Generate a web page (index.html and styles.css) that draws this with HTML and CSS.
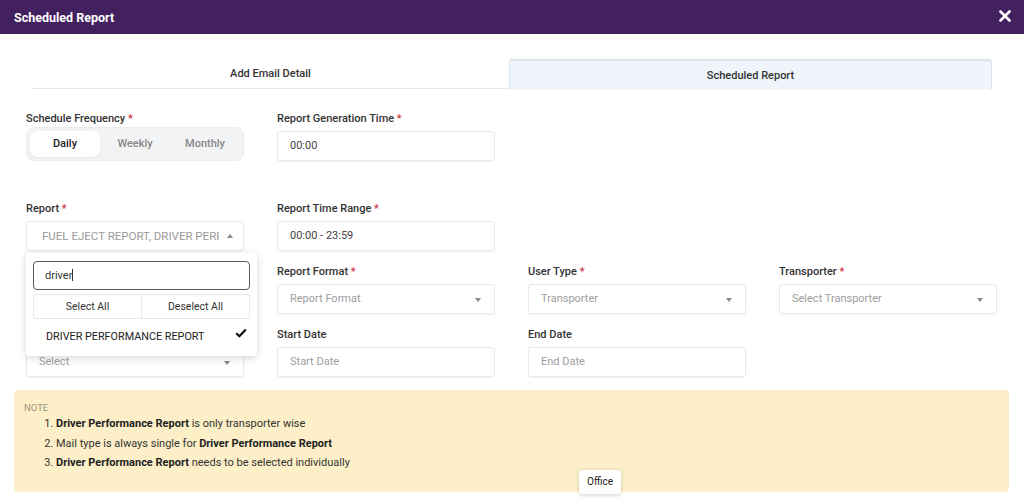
FILE: index.html
```html
<!DOCTYPE html>
<html lang="en">
<head>
	<meta charset="UTF-8">
	<title>Scheduled Report</title>
	<link rel="stylesheet" href="styles.css">
</head>
<body>
<div class="modal">
	<div class="modal-head">
		<span class="modal-title">Scheduled Report</span>
		<svg class="close" width="12" height="12" viewBox="0 0 12 12"><path d="M1.5 1.5L10.5 10.5M10.5 1.5L1.5 10.5" stroke="#fff" stroke-width="2.6" stroke-linecap="round"/></svg>
	</div>

	<div class="tabs">
		<div class="tab">Add Email Detail</div>
		<div class="tab active">Scheduled Report</div>
	</div>

	<div class="form">
		<div class="row first">
			<div class="group">
				<label>Schedule Frequency <i>*</i></label>
				<div class="segment">
					<span class="on">Daily</span>
					<span>Weekly</span>
					<span>Monthly</span>
				</div>
			</div>
			<div class="group">
				<label>Report Generation Time <i>*</i></label>
				<div class="field">00:00</div>
			</div>
		</div>

		<div class="row">
			<div class="group report">
				<label>Report <i>*</i></label>
				<div class="field select open"><span class="clip">FUEL EJECT REPORT, DRIVER PERFOR</span><b class="up"></b></div>
				<div class="dropdown">
					<div class="search">driver<span class="caret"></span></div>
					<div class="btns">
						<span>Select All</span>
						<span>Deselect All</span>
					</div>
					<div class="option">DRIVER PERFORMANCE REPORT<svg class="tick" width="12" height="10" viewBox="0 0 12 10"><path d="M1.2 5.2L4.4 8.3L10.8 1.4" fill="none" stroke="#111" stroke-width="2.2"/></svg></div>
				</div>
			</div>
			<div class="group">
				<label>Report Time Range <i>*</i></label>
				<div class="field">00:00 - 23:59</div>
			</div>
		</div>

		<div class="row">
			<div class="group">
				<label>&nbsp;</label>
				<div class="field"></div>
			</div>
			<div class="group">
				<label>Report Format <i>*</i></label>
				<div class="field select ph">Report Format<b></b></div>
			</div>
			<div class="group">
				<label>User Type <i>*</i></label>
				<div class="field select ph">Transporter<b></b></div>
			</div>
			<div class="group">
				<label>Transporter <i>*</i></label>
				<div class="field select ph">Select Transporter<b></b></div>
			</div>
		</div>

		<div class="row last">
			<div class="group">
				<label>&nbsp;</label>
				<div class="field select ph">Select<b></b></div>
			</div>
			<div class="group">
				<label>Start Date</label>
				<div class="field ph">Start Date</div>
			</div>
			<div class="group">
				<label>End Date</label>
				<div class="field ph">End Date</div>
			</div>
		</div>
	</div>

	<div class="note">
		<div class="note-title">NOTE</div>
		<ol>
			<li><strong>Driver Performance Report</strong> is only transporter wise</li>
			<li>Mail type is always single for <strong>Driver Performance Report</strong></li>
			<li><strong>Driver Performance Report</strong> needs to be selected individually</li>
		</ol>
		<div class="tooltip">Office</div>
	</div>
</div>
</body>
</html>
```

FILE: styles.css
```css
*{
	box-sizing: border-box;
}
body{
	margin: 0;
	background: #fff;
	font-family: Roboto, "Liberation Sans", Arial, sans-serif;
	color: #333;
}
.modal{
	width: 1024px;
	height: 501px;
	overflow: hidden;
}
.modal-head{
	height: 34px;
	background: #43215f;
	display: flex;
	align-items: center;
	justify-content: space-between;
	padding: 0 13px 0 14px;
}
.modal-title{
	color: #fff;
	font-size: 12.5px;
	font-weight: 700;
}
.close{
	margin-top: -3px;
}

.tabs{
	display: flex;
	margin: 25px 32px 0 32px;
}
.tab{
	height: 30px;
	line-height: 30px;
	font-size: 11px;
	font-weight: 500;
	color: #333;
	text-align: center;
	border-bottom: 1px solid #e4e9ee;
	width: 477px;
}
.tab.active{
	width: 483px;
	background: #eff5fb;
	border: 1px solid #dde5ec;
	border-top: 2px solid #dfe5eb;
	border-bottom: none;
	border-radius: 3px 3px 0 0;
	height: 31px;
}

.form{
	padding: 22px 26px 0 26px;
}
.row{
	display: grid;
	grid-template-columns: repeat(4, 218px);
	column-gap: 33px;
	margin-bottom: 14px;
}
.row.first{
	margin-bottom: 41px;
}
.row.last{
	margin-bottom: 13px;
}
.group{
	position: relative;
}
label{
	display: block;
	font-size: 11px;
	font-weight: 500;
	line-height: 14px;
	margin-bottom: 5px;
	color: #333;
}
label i{
	color: #d0344b;
	font-style: normal;
}
.field{
	height: 30px;
	line-height: 28px;
	border: 1px solid #e9e9e9;
	border-radius: 3px;
	box-shadow: 0 1px 2px rgba(0,0,0,0.05);
	padding: 0 12px;
	font-size: 11px;
	color: #444;
	background: #fff;
	position: relative;
}
.field.ph{
	color: #9e9e9e;
}
.select b{
	position: absolute;
	right: 13px;
	top: 13px;
	border-left: 3.5px solid transparent;
	border-right: 3.5px solid transparent;
	border-top: 4px solid #888;
}
.select b.up{
	border-top: none;
	border-bottom: 4px solid #888;
	right: 10px;
	top: 12px;
}
.select.open{
	padding: 0 24px 0 15px;
	color: #9a9a9a;
	font-size: 11.5px;
	text-transform: uppercase;
}
.clip{
	display: block;
	white-space: nowrap;
	overflow: hidden;
}

.segment{
	display: flex;
	height: 34px;
	margin-top: -4px;
	background: #f2f3f5;
	border: 1px solid #ebecee;
	border-radius: 8px;
	padding: 3px;
}
.segment span{
	flex: 1;
	text-align: center;
	line-height: 26px;
	font-size: 11px;
	font-weight: 500;
	color: #888;
}
.segment .on{
	background: #fff;
	color: #222;
	border-radius: 7px;
	box-shadow: 0 1px 2px rgba(0,0,0,0.06);
}

.dropdown{
	position: absolute;
	top: 51px;
	left: 0;
	width: 231px;
	height: 103px;
	background: #fff;
	box-shadow: 0 2px 8px rgba(0,0,0,0.16);
	border-radius: 2px;
	padding: 8px 7px;
	z-index: 2;
}
.search{
	height: 29px;
	border: 1px solid #5b5569;
	border-radius: 4px;
	padding: 0 11px;
	line-height: 27px;
	font-size: 11px;
	color: #333;
}
.caret{
	display: inline-block;
	width: 1px;
	height: 12px;
	background: #333;
	vertical-align: middle;
	margin-top: -2px;
}
.btns{
	display: flex;
	margin-top: 4px;
	border: 1px solid #e7e7e7;
	border-radius: 2px;
	height: 25px;
}
.btns span{
	flex: 1;
	text-align: center;
	line-height: 23px;
	font-size: 10.5px;
	color: #333;
}
.btns span + span{
	border-left: 1px solid #e7e7e7;
}
.option{
	position: relative;
	padding: 0 0 0 13px;
	margin-top: 4px;
	line-height: 28px;
	font-size: 10.8px;
	color: #222;
}
.tick{
	position: absolute;
	right: 3px;
	top: 5px;
}

.note{
	position: relative;
	margin: 0 15px 0 14px;
	height: 102px;
	background: #fdf0c8;
	border-radius: 4px;
	padding: 12px 10px 0 10px;
}
.note-title{
	font-size: 9.5px;
	color: #9a9482;
	line-height: 12px;
}
.note ol{
	margin: 0;
	padding-left: 32px;
	font-size: 11px;
	line-height: 19.5px;
	color: #333;
}
.note strong{
	font-weight: 700;
	color: #222;
}
.tooltip{
	position: absolute;
	left: 565px;
	top: 80px;
	width: 42px;
	height: 24px;
	line-height: 24px;
	text-align: center;
	font-size: 10px;
	color: #222;
	background: #fff;
	border-radius: 4px;
	box-shadow: 0 1px 4px rgba(0,0,0,0.2);
}
```
